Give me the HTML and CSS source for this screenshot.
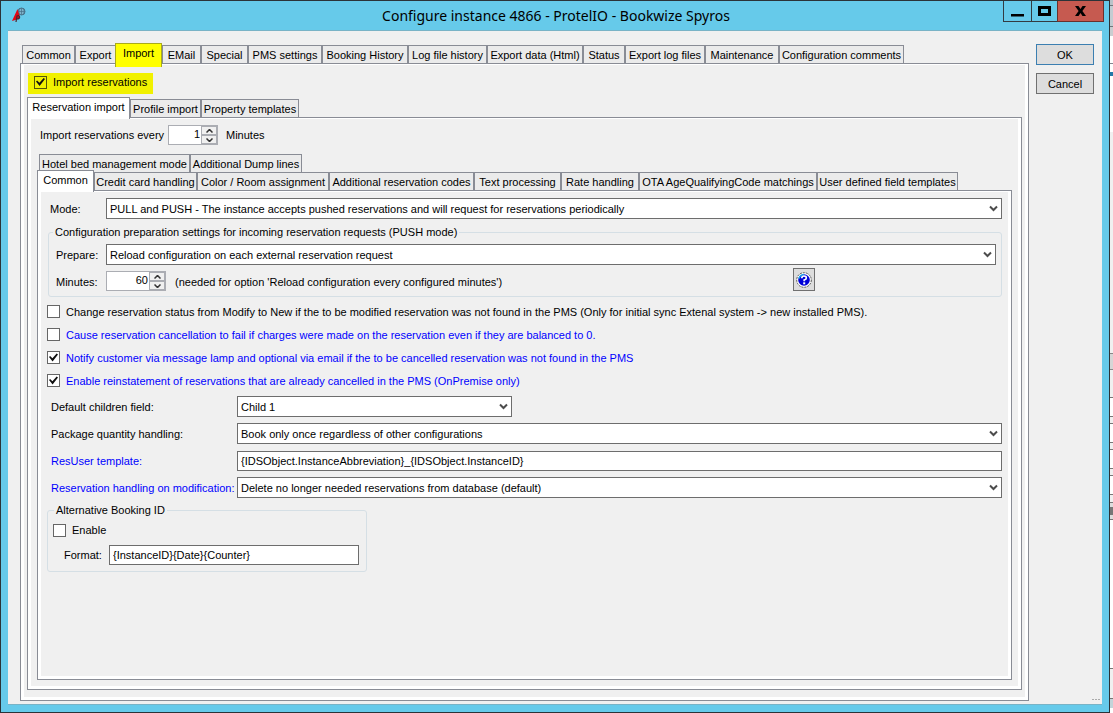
FILE: index.html
```html
<!DOCTYPE html>
<html lang="en">
<head>
<meta charset="utf-8">
<title>Configure instance 4866 - ProtelIO - Bookwize Spyros</title>
<link rel="stylesheet" href="styles.css">
</head>
<body>
<div class="desktop">
<div class="window">
  <header class="titlebar">
    <svg class="app-icon" width="16" height="16" viewBox="0 0 16 16" aria-hidden="true">
      <circle cx="9.500" cy="4.500" r="3.500" fill="#7fb3ca" stroke="#456f86" stroke-width="1"/>
      <path d="M6 4.500h7M9.500 1v7M7.500 1.500q-1.500 3 0 6M11.500 1.500q1.500 3 0 6" fill="none" stroke="#456f86" stroke-width=".7"/>
      <path d="M5.500 2 0 14l5-1.500 3-2z" fill="#e30613"/>
      <path d="M4 15 5 9q2.600-1 2.600 1T5 12" fill="none" stroke="#4a2630" stroke-width="1.200"/>
    </svg>
    <h1 class="title">Configure instance 4866 - ProtelIO - Bookwize Spyros</h1>
    <div class="caption">
      <button type="button" class="cap cap-min" aria-label="Minimize"><svg width="13" height="12" viewBox="0 0 13 12"><path d="M0 9h13v2.500H0z"/></svg></button>
      <button type="button" class="cap cap-max" aria-label="Maximize"><svg width="13" height="10" viewBox="0 0 13 10"><path d="M1.500 1.500h10v7h-10z" fill="none" stroke="#000" stroke-width="3"/></svg></button>
      <button type="button" class="cap cap-close" aria-label="Close"><svg width="11" height="10" viewBox="0 0 11 10"><path d="M0 0h3.500l2 3 2-3H11L7.400 5 11 10H7.500l-2-3-2 3H0l3.600-5z"/></svg></button>
    </div>
  </header>

  <main class="client">
    <section class="pages">
      <div class="tabs tabs-main" role="tablist">
        <button type="button" class="tab" role="tab">Common</button>
        <button type="button" class="tab" role="tab">Export</button>
        <button type="button" class="tab active marked" role="tab" aria-selected="true">Import</button>
        <button type="button" class="tab" role="tab">EMail</button>
        <button type="button" class="tab" role="tab">Special</button>
        <button type="button" class="tab" role="tab">PMS settings</button>
        <button type="button" class="tab" role="tab">Booking History</button>
        <button type="button" class="tab" role="tab">Log file history</button>
        <button type="button" class="tab" role="tab">Export data (Html)</button>
        <button type="button" class="tab" role="tab">Status</button>
        <button type="button" class="tab" role="tab">Export log files</button>
        <button type="button" class="tab" role="tab">Maintenance</button>
        <button type="button" class="tab" role="tab">Configuration comments</button>
      </div>
      <div class="panel panel-main">
        <label class="check import-toggle"><input type="checkbox" checked>Import reservations</label>

        <div class="tabs tabs-import" role="tablist">
          <button type="button" class="tab active" role="tab" aria-selected="true">Reservation import</button>
          <button type="button" class="tab" role="tab">Profile import</button>
          <button type="button" class="tab" role="tab">Property templates</button>
        </div>
        <div class="panel panel-import">
          <div class="interval">
            <label for="every">Import reservations every</label>
            <span class="spinner spinner-small"><input id="every" type="number" value="1"><span class="steps">
              <button type="button" aria-label="Increase"><svg width="7" height="4" viewBox="0 0 7 4"><path d="M.5 3.500l3-3 3 3"/></svg></button>
              <button type="button" aria-label="Decrease"><svg width="7" height="4" viewBox="0 0 7 4"><path d="M.5.5l3 3 3-3"/></svg></button>
            </span></span>
            <span>Minutes</span>
          </div>

          <div class="tabs tabs-back" role="tablist">
            <button type="button" class="tab" role="tab">Hotel bed management mode</button>
            <button type="button" class="tab" role="tab">Additional Dump lines</button>
          </div>
          <div class="tabs tabs-front" role="tablist">
            <button type="button" class="tab active" role="tab" aria-selected="true">Common</button>
            <button type="button" class="tab" role="tab">Credit card handling</button>
            <button type="button" class="tab" role="tab">Color / Room assignment</button>
            <button type="button" class="tab" role="tab">Additional reservation codes</button>
            <button type="button" class="tab" role="tab">Text processing</button>
            <button type="button" class="tab" role="tab">Rate handling</button>
            <button type="button" class="tab" role="tab">OTA AgeQualifyingCode matchings</button>
            <button type="button" class="tab" role="tab">User defined field templates</button>
          </div>
          <form class="panel panel-form">
            <div class="row mode">
              <label for="mode">Mode:</label>
              <span class="combo"><select id="mode"><option>PULL and PUSH - The instance accepts pushed reservations and will request for reservations periodically</option></select><svg width="9" height="7" viewBox="0 0 9 7"><path d="M1 1.500l3.500 3.500L8 1.500"/></svg></span>
            </div>

            <fieldset class="group push">
              <legend>Configuration preparation settings for incoming reservation requests (PUSH mode)</legend>
              <div class="row">
                <label for="prepare">Prepare:</label>
                <span class="combo"><select id="prepare"><option>Reload configuration on each external reservation request</option></select><svg width="9" height="7" viewBox="0 0 9 7"><path d="M1 1.500l3.500 3.500L8 1.500"/></svg></span>
              </div>
              <div class="row minutes">
                <label for="minutes">Minutes:</label>
                <span class="spinner"><input id="minutes" type="number" value="60"><span class="steps">
                  <button type="button" aria-label="Increase"><svg width="7" height="4" viewBox="0 0 7 4"><path d="M.5 3.500l3-3 3 3"/></svg></button>
                  <button type="button" aria-label="Decrease"><svg width="7" height="4" viewBox="0 0 7 4"><path d="M.5.5l3 3 3-3"/></svg></button>
                </span></span>
                <span class="hint">(needed for option 'Reload configuration every configured minutes')</span>
                <button type="button" class="help" aria-label="Help"><svg width="16" height="16" viewBox="0 0 16 16"><circle cx="8" cy="8" r="7.300" fill="#fff" stroke="#555" stroke-width="1" stroke-dasharray="2 1"/><circle cx="8" cy="8" r="5.800" fill="#0000d8"/><path d="M3 6.500A5.500 5.500 0 0 1 8 2.400" fill="none" stroke="#1aa5e8" stroke-width="1.500"/><path d="M5.800 6.200q0-2.200 2.300-2.200t2.200 2Q10.300 7.400 8.200 8v1.200" fill="none" stroke="#fff" stroke-width="1.700"/><path d="M7.200 10.300h2v2h-2z" fill="#fff"/></svg></button>
              </div>
            </fieldset>

            <div class="checks">
              <label class="check"><input type="checkbox">Change reservation status from Modify to New if the to be modified reservation was not found in the PMS (Only for initial sync Extenal system -&gt; new installed PMS).</label>
              <label class="check blue"><input type="checkbox">Cause reservation cancellation to fail if charges were made on the reservation even if they are balanced to 0.</label>
              <label class="check blue"><input type="checkbox" checked>Notify customer via message lamp and optional via email if the to be cancelled reservation was not found in the PMS</label>
              <label class="check blue"><input type="checkbox" checked>Enable reinstatement of reservations that are already cancelled in the PMS (OnPremise only)</label>
            </div>

            <div class="fields">
              <label for="child">Default children field:</label>
              <span class="combo combo-short"><select id="child"><option>Child 1</option></select><svg width="9" height="7" viewBox="0 0 9 7"><path d="M1 1.500l3.500 3.500L8 1.500"/></svg></span>
              <label for="package">Package quantity handling:</label>
              <span class="combo"><select id="package"><option>Book only once regardless of other configurations</option></select><svg width="9" height="7" viewBox="0 0 9 7"><path d="M1 1.500l3.500 3.500L8 1.500"/></svg></span>
              <label class="blue" for="resuser">ResUser template:</label>
              <input class="text" id="resuser" type="text" value="{IDSObject.InstanceAbbreviation}_{IDSObject.InstanceID}">
              <label class="blue" for="modification">Reservation handling on modification:</label>
              <span class="combo"><select id="modification"><option>Delete no longer needed reservations from database (default)</option></select><svg width="9" height="7" viewBox="0 0 9 7"><path d="M1 1.500l3.500 3.500L8 1.500"/></svg></span>
            </div>

            <fieldset class="group booking">
              <legend>Alternative Booking ID</legend>
              <label class="check"><input type="checkbox">Enable</label>
              <div class="format">
                <label for="format">Format:</label>
                <input class="text" id="format" type="text" value="{InstanceID}{Date}{Counter}">
              </div>
            </fieldset>
          </form>
        </div>
      </div>
    </section>

    <aside class="actions">
      <button type="button" class="push-button default">OK</button>
      <button type="button" class="push-button">Cancel</button>
      <span class="grip" aria-hidden="true"></span>
    </aside>
  </main>
</div>
<div class="behind" aria-hidden="true"></div>
</div>
</body>
</html>
```
FILE: styles.css
```css
* { box-sizing: border-box; }

body {
  margin: 0;
  font: 11px/14px "Liberation Sans", Arial, sans-serif;
  color: #000;
}

button, input, select { font: inherit; color: inherit; margin: 0; padding: 0; border-radius: 0; }

.desktop { display: flex; height: 100vh; min-height: 640px; overflow: hidden; }

.window {
  flex: 1;
  min-width: 0;
  display: flex;
  flex-direction: column;
  background: #66caea;
  border: 1px solid #2b3338;
  padding: 0 7px 7px;
}

/* the strip of the next window showing past the right edge */
.behind {
  width: 3px;
  background: linear-gradient(#b9c3c9 0 5px, #6f777c 5px 6px, #c3ccd2 6px 26px, #6f777c 26px 27px, #c9cdd0 27px 36px, #fff 36px 63px, #82868f 63px 64px, #fff 64px 72px, #2378a8 72px 76px, #fff 76px 132px, #f0f0f0 132px 353px, #888 353px 354px, #d6d6d6 354px 369px, #888 369px 370px, #f0f0f0 370px 397px, #777 397px 398px, #fff 398px 416px, #777 416px 417px, #f0f0f0 417px 423px, #777 423px 424px, #fff 424px 442px, #777 442px 443px, #f0f0f0 443px 449px, #777 449px 450px, #fff 450px 468px, #777 468px 469px, #f0f0f0 469px 475px, #777 475px 476px, #fff 476px 494px, #777 494px 495px, #f0f0f0 495px 502px, #777 502px 503px, #ddd 503px 507px, #777 507px 515px, #ddd 515px 519px, #777 519px 520px, #fff 520px 668px, #777 668px 669px, #f0f0f0 669px 698px, #777 698px 699px, #c3d4d9 699px 708px, #fff 708px);
}

.titlebar {
  display: grid;
  grid-template-columns: 1fr auto 1fr;
  height: 29px;
  flex: none;
  margin-right: -2px;
}
.app-icon { margin: 6px 0 0 4px; }
.title { margin: 0; padding-top: 5px; font: 14px/20px "Noto Sans", sans-serif; white-space: nowrap; }
.caption { display: flex; justify-self: end; align-self: start; }
.cap {
  display: grid;
  place-items: center;
  height: 21px;
  border: 1px solid #333b41;
  border-width: 0 0 1px 1px;
  background: #66caea;
}
.cap-min { width: 28px; }
.cap-max { width: 26px; }
.cap-close { width: 47px; background: #c65a50; border-color: #6a302c; border-right-width: 1px; }

.client {
  flex: 1;
  min-height: 0;
  display: flex;
  gap: 7px;
  padding: 12px 8px 3px 12px;
  background: #f0f0f0;
  border: 1px solid #79b3c6;
  border-width: 1px 0;
}
.pages { flex: 1; min-width: 0; display: flex; flex-direction: column; }

/* tab strips */
.tabs { display: grid; align-items: end; height: 20px; flex: none; position: relative; }
.tabs-main { grid-template-columns: 53px 41px 46px 39px 47px 74px 86px 79px 96px 42px 80px 74px 125px; margin-left: 2px; }
.tabs-import { grid-template-columns: 103px 71px 98px; margin: 3px 0 0 3px; }
.tabs-back { grid-template-columns: 151px 112px; height: 18px; margin: 9px 0 0 8px; }
.tabs-front { grid-template-columns: 57px 103px 132px 145px 87px 78px 178px 141px; margin: -2px 0 0 6px; }
.tab {
  height: 18px;
  display: flex;
  justify-content: center;
  padding-top: 2px;
  border: 1px solid #898c95;
  border-bottom: 0;
  background: #ebebeb;
  white-space: nowrap;
}
.tab.active { height: 22px; margin-bottom: -2px; background: #fff; position: relative; }
.tab.marked { background: #ff0; border-color: #a9aa1c; margin-left: -1px; height: 24px; margin-bottom: -4px; }

.panel {
  flex: 1;
  min-height: 0;
  display: flex;
  flex-direction: column;
  border: 1px solid #898c95;
  background: #f0f0f0;
  box-shadow: inset 0 1px #fff, inset 3px 0 #fff, inset -3px -3px #fff;
  padding: 1px 3px 3px;
}
.panel-import { margin: 0 3px 7px 3px; }
.panel-form { margin: 0 6px 6px 6px; padding: 7px 9px 3px 12px; }

/* check boxes */
.check { display: flex; align-items: center; gap: 6px; white-space: nowrap; }
.check input {
  appearance: none;
  width: 13px;
  height: 13px;
  flex: none;
  border: 1px solid #666;
  background: #fff;
  display: grid;
  place-items: center;
}
.check input:checked::before {
  content: "";
  width: 9px;
  height: 9px;
  background: #111;
  clip-path: polygon(0 45%, 12% 33%, 38% 58%, 85% 5%, 100% 18%, 40% 95%);
}
.blue { color: #00f; }
.import-toggle {
  align-self: start;
  width: 125px;
  height: 21px;
  flex: none;
  margin: 8px 0 0 4px;
  padding: 0 0 3px 6px;
  background: #f1f100;
}
.import-toggle input { background: transparent; border-color: #55550a; }

/* combo boxes, text boxes and spinners */
.combo { position: relative; flex: 1; display: flex; height: 21px; }
.combo select {
  appearance: none;
  flex: 1;
  min-width: 0;
  padding: 0 20px 0 3px;
  border: 1px solid #6d6d6d;
  background: #fff;
}
.combo svg { position: absolute; right: 4px; top: 7px; fill: none; stroke: #4c4c4c; stroke-width: 2; pointer-events: none; }
.text { height: 20px; padding: 0 3px; border: 1px solid #6d6d6d; background: #fff; min-width: 0; }

.spinner { display: flex; width: 60px; height: 20px; border: 1px solid #abadb3; background: #fff; }
.spinner-small { width: 50px; margin: 0 8px 0 10px; }
.spinner input { flex: 1; min-width: 0; border: 0; padding: 0 1px 2px 0; background: none; text-align: right; appearance: textfield; }
.spinner input::-webkit-inner-spin-button { appearance: none; }
.steps { display: grid; width: 16px; grid-template-rows: 1fr 1fr; }
.steps button { display: grid; place-items: center; border: 1px solid #abadb3; background: #f0f0f0; min-height: 0; }
.steps path { fill: none; stroke: #333; stroke-width: 1.500; }

.interval { display: flex; align-items: center; margin: 6px 0 0 9px; }
.interval label { width: 118px; white-space: nowrap; }

/* form */
.row { display: flex; align-items: center; }
.row label { width: 50px; }
.row.mode label { width: 56px; }
.group {
  min-width: 0;
  margin: 0;
  border: 1px solid #d5dfe5;
  border-radius: 3px;
}
.group legend { padding: 0 2px; white-space: nowrap; }
.push { margin: 6px 0 0 -2px; padding: 5px 5px 5px 7px; }
.push legend { margin-left: -3px; }
.minutes { margin-top: 3px; height: 23px; align-items: end; }
.minutes label, .hint { padding-bottom: 2px; }
.hint { margin-left: 9px; white-space: nowrap; }
.help {
  display: grid;
  place-items: center;
  width: 22px;
  height: 23px;
  margin: 0 181px 0 auto;
  border: 1px solid #707070;
  background: #ddd;
}

.checks { display: grid; grid-auto-rows: 23px; justify-content: start; margin: 3px 0 0 -3px; }
.fields {
  display: grid;
  grid-template-columns: 186px 1fr;
  grid-auto-rows: 21px;
  gap: 6px 0;
  align-items: center;
  margin-top: 4px;
  padding-left: 1px;
}
.fields label { white-space: nowrap; }
.combo-short { width: 275px; }

.booking { width: 320px; margin: 5px 0 0 -3px; padding: 6px 7px 6px 5px; }
.booking legend { margin-left: 1px; }
.format { display: flex; align-items: center; margin: 8px 0 0 11px; }
.format label { width: 45px; }
.format .text { flex: 1; }

/* dialog buttons */
.actions { width: 58px; display: flex; flex-direction: column; gap: 8px; padding-top: 1px; }
.push-button { height: 21px; border: 1px solid #707070; background: #ddd; }
.push-button.default { border-color: #3c7fb1; }
.grip { width: 8px; height: 1px; margin: auto -6px 1px auto; background: repeating-linear-gradient(90deg, #aaa 0 2px, transparent 2px 3px); }
```
